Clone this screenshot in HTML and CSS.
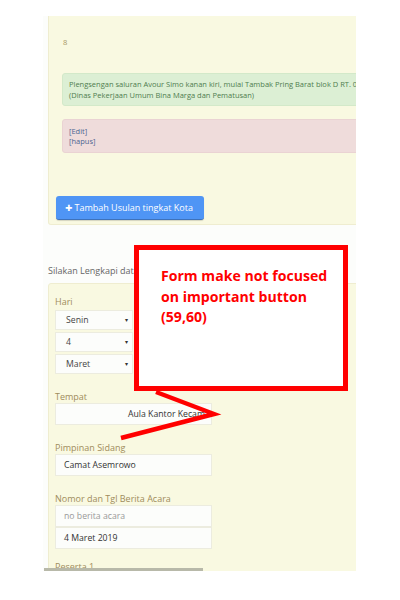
FILE: index.html
```html
<!DOCTYPE html>
<html>
<head>
<meta charset="utf-8">
<link rel="stylesheet" href="styles.css">
</head>
<body>
<div class="shot">
  <div class="panel top-panel">
    <div class="num">8</div>
    <div class="alert ok">Plengsengan saluran Avour Simo kanan kiri, mulai Tambak Pring Barat blok D RT. 08, RW. 04<br>(Dinas Pekerjaan Umum Bina Marga dan Pematusan)</div>
    <div class="alert bad"><a>[Edit]</a><br><a>[hapus]</a></div>
    <button class="btn"><span class="plus">✚</span> Tambah Usulan tingkat Kota</button>
  </div>
  <div class="intro">Silakan Lengkapi data</div>
  <div class="panel form-panel">
    <div class="field">
      <div class="label">Hari</div>
      <div class="sel"><span>Senin</span><span class="caret">▾</span></div>
      <div class="sel"><span>4</span><span class="caret">▾</span></div>
      <div class="sel"><span>Maret</span><span class="caret">▾</span></div>
    </div>
    <div class="field">
      <div class="label">Tempat</div>
      <div class="inp inp-far">Aula Kantor Kecamatan</div>
    </div>
    <div class="field">
      <div class="label">Pimpinan Sidang</div>
      <div class="inp">Camat Asemrowo</div>
    </div>
    <div class="field tight">
      <div class="label">Nomor dan Tgl Berita Acara</div>
      <div class="inp ph">no berita acara</div>
      <div class="inp">4 Maret 2019</div>
    </div>
    <div class="field">
      <div class="label">Peserta 1</div>
    </div>
  </div>
  <div class="scrollbar"></div>
</div>
<div class="callout">
  <p>Form make not focused on important button (59,60)</p>
</div>
<svg class="arrow" width="400" height="600" viewBox="0 0 400 600">
  <polyline points="156,392 214,414 121,438" fill="none" stroke="#ff0000" stroke-width="4.5" stroke-linejoin="miter"/>
</svg>
</body>
</html>
```

FILE: styles.css
```css
html, body {
  margin: 0;
  padding: 0;
  background: #ffffff;
}
body {
  width: 400px;
  height: 600px;
  position: relative;
  font-family: "Open Sans", "DejaVu Sans", sans-serif;
}
.shot {
  margin: 16px 0 0 43px;
  width: 313px;
  height: 555px;
  overflow: hidden;
  background: #fcfdfb;
  position: relative;
}
.panel {
  margin-left: 5px;
  width: 500px;
  background: #f9f9e1;
  border: 1px solid #efedd0;
  box-sizing: border-box;
}
.top-panel {
  height: 209px;
  padding: 20px 0 0 7px;
  border-top: none;
  border-radius: 0 0 0 3px;
}
.num {
  font-size: 7.5px;
  line-height: 12px;
  color: #a89866;
  margin-left: 7px;
}
.alert {
  margin-left: 6px;
  font-size: 7.5px;
  line-height: 11px;
  border-radius: 3px;
  white-space: nowrap;
}
.ok {
  margin-top: 25px;
  background: #dcefd4;
  border: 1px solid #d3e9c9;
  padding: 5px 6px 4px;
  color: #4f7d4f;
}
.bad {
  margin-top: 13px;
  background: #efdcdb;
  border: 1px solid #ead3d3;
  line-height: 10px;
  padding: 6px 6px 6px;
  color: #4d6591;
}
.btn {
  margin-top: 43px;
  display: block;
  width: 148px;
  height: 24px;
  padding: 0 0 0 9px;
  text-align: left;
  background: #4f95f5;
  color: #ffffff;
  border: none;
  border-bottom: 1px solid #3e72bb;
  border-radius: 3px;
  font-family: "Open Sans", "DejaVu Sans", sans-serif;
  font-size: 9px;
  white-space: nowrap;
  box-shadow: 0 1px 1px rgba(0,0,0,0.15);
}
.plus {
  font-size: 8.5px;
}
.intro {
  margin: 40px 0 0 5px;
  font-size: 9px;
  line-height: 12px;
  color: #666666;
}
.form-panel {
  margin-top: 6px;
  height: 300px;
  border-radius: 3px 0 0 0;
  padding: 12px 0 0 6px;
}
.field {
  margin-bottom: 17px;
}
.field.tight {
  margin-bottom: 12px;
}
.label {
  font-size: 9px;
  line-height: 12px;
  color: #9f8c5c;
}
.sel {
  width: 78px;
  height: 20px;
  box-sizing: border-box;
  margin-top: 2px;
  background: #fcfdfb;
  border: 1px solid #ececdf;
  display: flex;
  justify-content: space-between;
  align-items: center;
  padding: 0 4px 0 10px;
  font-size: 8.7px;
  color: #444444;
}
.sel:first-of-type {
  margin-top: 0;
}
.caret {
  font-size: 6px;
  color: #333333;
}
.inp {
  width: 157px;
  height: 22px;
  box-sizing: border-box;
  background: #fcfdfb;
  border: 1px solid #ececdf;
  display: flex;
  align-items: center;
  padding-left: 8px;
  font-size: 8.7px;
  color: #333333;
  white-space: nowrap;
  overflow: hidden;
}
.inp-far {
  padding-left: 72px;
}
.ph {
  color: #999999;
}
.scrollbar {
  position: absolute;
  left: 1px;
  top: 552px;
  width: 159px;
  height: 3px;
  background: #b8b9a9;
}
.callout {
  position: absolute;
  left: 134px;
  top: 245px;
  width: 214px;
  height: 146px;
  box-sizing: border-box;
  border: 5px solid #ff0000;
  background: #ffffff;
  padding: 16px 8px 0 22px;
}
.callout p {
  margin: 0;
  font-size: 14.1px;
  line-height: 20.5px;
  font-weight: bold;
  color: #ff0000;
}
.arrow {
  position: absolute;
  left: 0;
  top: 0;
  pointer-events: none;
}
```
